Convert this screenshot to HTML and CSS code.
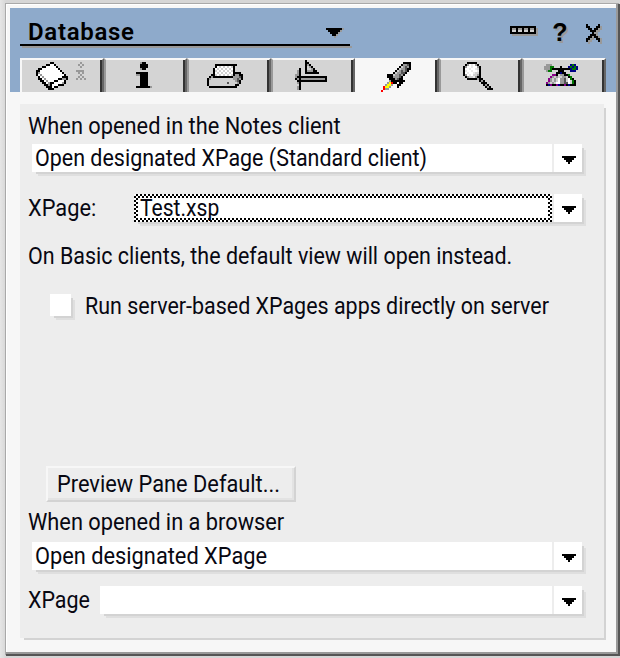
FILE: index.html
```html
<!DOCTYPE html>
<html lang="en">
<head>
<meta charset="utf-8">
<title>Database</title>
<link rel="stylesheet" href="styles.css">
</head>
<body>
<main class="window">
  <header class="header">
    <div class="titlebar">
      <div class="title"><div class="title-row"><span class="title-text">Database</span><svg class="px title-arrow" data-icon="arrowBig"></svg></div><div class="rule"></div></div>
      <div class="controls"><svg class="px" data-icon="collapse"></svg><span class="help">?</span><svg class="px" data-icon="close"></svg></div>
    </div>
    <nav class="tabs">
      <div class="tab first"><svg class="px" data-icon="book"></svg><svg class="px faint" data-icon="smallInfo"></svg></div>
      <div class="tab"><svg class="px info" data-icon="info"></svg></div>
      <div class="tab"><svg class="px print" data-icon="printer"></svg></div>
      <div class="tab"><svg class="px design" data-icon="design"></svg></div>
      <div class="tab active"><svg class="px rocket" data-icon="rocket"></svg></div>
      <div class="tab"><svg class="px search" data-icon="search"></svg></div>
      <div class="tab"><svg class="px advanced" data-icon="advanced"></svg></div>
    </nav>
  </header>
  <section class="panel">
    <div class="label wide"><span class="t">When opened in the Notes client</span></div>
    <div class="select inset client"><div class="value"><span class="t">Open designated XPage (Standard client)</span></div><div class="drop"><svg class="px" data-icon="arrow"></svg></div></div>
    <div class="row page"><div class="label wide"><span class="t">XPage:</span></div><div class="select"><div class="value focus"><span class="t">Test.xsp</span></div><div class="drop"><svg class="px" data-icon="arrow"></svg></div></div></div>
    <div class="label note"><span class="t">On Basic clients, the default view will open instead.</span></div>
    <label class="row check"><span class="box"></span><span class="t">Run server-based XPages apps directly on server</span></label>
    <div class="button wide"><span class="t">Preview Pane Default...</span></div>
    <div class="label browser wide"><span class="t">When opened in a browser</span></div>
    <div class="select inset open wide"><div class="value"><span class="t">Open designated XPage</span></div><div class="drop"><svg class="px" data-icon="arrow"></svg></div></div>
    <div class="row last"><div class="label"><span class="t">XPage</span></div><div class="select"><div class="value"></div><div class="drop"><svg class="px" data-icon="arrow"></svg></div></div></div>
  </section>
</main>
<script src="icons.js"></script>
</body>
</html>
```
FILE: styles.css
```css
* { box-sizing: border-box; }
body { margin: 0; width: 620px; height: 658px; overflow: hidden; padding: 4px 0 0 6px; background: linear-gradient(90deg, #e6e6e6, #d6d6d6 6px); font: 24px/28px Roboto, "Liberation Sans", sans-serif; color: #080812; }
.window { width: 614px; height: 652px; background: #f7f7f7; border-right: 2px solid #555; border-bottom: 2px solid #555; box-shadow: inset -2px -2px #999, inset 1px 1px #fff, -1px -1px #a9a9a9; padding: 4px 2px 0 4px; }
.header { width: 606px; height: 84px; background: #8eaacb; padding: 0 10px; }
.titlebar { display: flex; justify-content: space-between; height: 50px; }
.title { width: 330px; }
.title-row { display: flex; align-items: flex-start; height: 36px; padding: 10px 8px 0; }
.rule { height: 2px; background: #000; box-shadow: 2px 2px #999; }
.title-text { font-weight: 600; flex: 1; color: #000; letter-spacing: .7px; }
.title-arrow { margin: 10px -2px 0 0; }
.controls { display: flex; align-items: flex-start; padding-right: 4px; }
.controls > [data-icon=collapse] { margin: 18px 14px 0 0; }
.controls > [data-icon=close] { margin: 16px 0 0 18px; }
.help { font: bold 25px/28px "Liberation Sans", sans-serif; color: #000; width: 16px; text-align: center; margin-top: 10px; text-shadow: 2px 2px #999; }
.px { display: block; flex: none; }
.tabs { display: flex; }
.tab { display: flex; width: 84px; height: 34px; background: #d4d4d4; border-top: 2px solid #f7f7f7; border-right: 2px solid #666; border-left: 2px solid #999; padding-top: 2px; box-shadow: inset -2px 0 #333; }
.tab.first { border-left-color: #f7f7f7; padding-left: 14px; }
.tab.active { background: #f7f7f7; border-left-color: #f7f7f7; }
.faint { margin-left: 8px; }
.info { margin-left: 30px; }
.print { margin: 2px 0 0 18px; }
.design { margin: -2px 0 0 22px; }
.rocket { margin-left: 24px; }
.search { margin-left: 22px; }
.advanced { margin: 2px 0 0 20px; }
.panel { width: 584px; height: 534px; margin: 12px 0 0 10px; padding: 8px 0 0; background: #ededed; box-shadow: 3px 3px 0 -1px #d3d3d3; }
.t { display: inline-block; white-space: nowrap; transform: scaleX(.894); transform-origin: left; }
.wide .t { transform: scaleX(.908); }
.label { height: 28px; padding-left: 8px; }
.select { display: flex; gap: 2px; height: 28px; width: 550px; box-shadow: 3px 3px 0 -1px #d3d3d3, 5px 5px 0 -1px #dfdfdf; background: #ededed; }
.inset { margin-left: 12px; }
.value { flex: 1; min-width: 0; background: #fff; padding-left: 3px; }
.drop { width: 28px; background: #fff; padding: 12px 0 0 8px; }
.client { margin-top: 4px; }
.row { display: flex; height: 28px; }
.page { margin-top: 22px; }
.page .label { width: 114px; }
.page .select { width: 448px; }
.focus { padding: 4px 4px 4px 6px; background: linear-gradient(#fff, #fff) 4px 4px / calc(100% - 8px) calc(100% - 8px) no-repeat, conic-gradient(#000 25%, #fff 0 50%, #000 0 75%, #fff 0) 0 0 / 4px 4px; }
.focus .t { margin-top: -4px; vertical-align: top; transform: scaleX(.878); }
.note { margin-top: 20px; }
.check { margin-top: 22px; padding-left: 30px; }
.box { width: 22px; height: 22px; margin: 2px 14px 0 0; background: #fff; box-shadow: 3px 3px 0 -1px #d3d3d3, 5px 5px 0 -1px #dfdfdf; }
.button { width: 250px; height: 36px; margin: 146px 0 0 26px; padding: 2px 9px 0; border: 2px solid #f7f7f7; border-right-color: #d3d3d3; border-bottom-color: #d3d3d3; box-shadow: inset -2px -2px #e3e3e3; }
.browser { margin-top: 6px; }
.open { margin-top: 6px; }
.last { margin-top: 16px; }
.last .label { width: 80px; }
.last .select { width: 482px; }
```
FILE: icons.js
```js
// Pixel icons: every character is one 2px cell, dots are transparent.
const colors = { K: '#000', w: '#fff', l: '#d0d0d0', g: '#999', d: '#555', r: '#f00', y: '#ff0', p: '#808', n: '#070', b: '#008', q: '#e8e8e8' };
const icons = {
  arrow: ['KKKKKKK', '.KKKKK.', '..KKK..', '...K...'],
  arrowBig: ['KKKKKKKKg', '.KKKKKKg.', '..KKKKg..', '...KKg...', '....g....'],
  collapse: ['KKKKKKKKKKKKK.', 'KggKggKggKggKg', 'KllKllKllKllKg', 'KKKKKKKKKKKKKg', '.ggggggggggggg'],
  close: ['K.....K.', 'KK...KKg', '.KK.KKgg', '..KKKgg.', '...Kgg..', '..KKKg..', '.KKgKKg.', 'KKgg.KKg', 'Kgg...Kg', '.g.....g'],
  book: ['.......KK.......', '.....KKwwK......', '...KKwwwwwK.....', '.KKwwwwwwwwK....', 'KKwwwwwwwwwwK...', 'KgwwwwwwwwwwwK..', 'KwgwwwwwwwwwwwK.', '.KwgwwwwwwwwwKKK', '.KKwgwwwwwwKKggK', '..KKwgwwwKKwwwK.', '...KKwgKKwwwwgK.', '....KKgKwwwKKK..', '.....KKKwKK.....', '......KKK.......'],
  smallInfo: ['..g..', '.g.g.', '..g..', '.....', 'gggg.', '.g.g.', '..g..', '.g.g.', 'g.g.g', '.....'],
  info: ['..gKK...', '..KKKK..', '..KKKK..', '..gKK...', '........', 'KKKKKK..', 'ggKKKK..', '..KKKK..', '..KKKK..', '..KKKK..', '..KKKK..', '..KKKK..', 'KKKKKKKg'],
  printer: ['....KKKKKKKKKKK...', '....KwlwlwlwlK....', '...KwlwlwlwlwK....', '...KlwlwlwlwlK....', '...KwlwlwlwlwKKKK.', '..KKlwlwlwlwlKggKK', '.KgKKKKKKKKKKgggdK', 'KglllllllllllggdgK', 'KlllllllllllllgdK.', 'KllllllllldllllgK.', 'KlllllllllllllKK..', '.KKKKKKKKKKKKKK...'],
  design: ['.....K..........', '.....KK.........', '.....KgK........', '.....KlgK.......', '..K..KllgK......', '.gK..KgggKK.....', '.gK..KKKKKKK....', 'ggK.............', 'gKKKKKKKKKKKKKKK', 'KgKggggggggggggK', '.KKKKKKKKKKKKKKK', '.gK.............', '..K.............', '.gK.............', '.gK.............'],
  rocket: ['...........KKKK', '..........KggdK', '.........KlgdgK', '........KlggdKK', '.......KlgdgdK.', '......KlggddK..', '...KKKlggdgK...', '...KKKgggdK....', '....KKKgdKK....', '....gKKKKKKK...', '...gyrKK.KK....', '..gyyg..KK.....', '.ryyg...K......', '.rgg...........', 'r..............'],
  search: ['..KKKKK........', '.KgwqwgK.......', 'KgwwqwwgK......', 'KwwqwwqlK......', 'KqwwqwwqK......', 'KwqwwqllK......', 'KgwqwllgK......', '.KgllqgKK......', '..KKKKKgKK.....', '........KgK....', '.........KKK...', '..........KgK..', '...........KgK.', '............KKK'],
  advanced: ['.ggg.........bnb.', 'gggnn...K...bnbnb', 'gggnKKKKKKKKKbnnb', '.gnn...KKK...bbb.', '......KKbKK......', '....ppKlggKKn....', '...pglgllgglKn...', '..pglglwggdlwnK..', '..pglglwggdlwlnK.', '.pglglwwggddwlnK.', '.KbpKKpbKKpKbKKK.']
};
const NS = 'http://www.w3.org/2000/svg';
document.querySelectorAll('svg[data-icon]').forEach(svg => {
  const rows = icons[svg.dataset.icon];
  const w = rows[0].length, h = rows.length;
  svg.setAttribute('width', w * 2);
  svg.setAttribute('height', h * 2);
  svg.setAttribute('viewBox', `0 0 ${w} ${h}`);
  rows.forEach((row, y) => [...row].forEach((c, x) => {
    if (!colors[c]) return;
    const cell = document.createElementNS(NS, 'rect');
    Object.entries({ x, y, width: 1, height: 1, fill: colors[c] }).forEach(([k, v]) => cell.setAttribute(k, v));
    svg.append(cell);
  }));
});
```
